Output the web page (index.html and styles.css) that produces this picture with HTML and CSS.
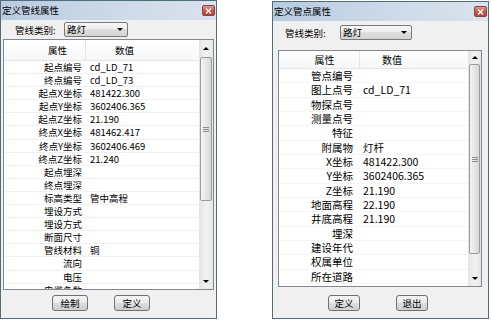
FILE: index.html
```html
<!DOCTYPE html>
<html lang="zh-CN">
<head>
    <meta charset="UTF-8">
    <title>管线属性</title>
    <link rel="stylesheet" href="styles.css">
</head>
<body>
    <!-- 定义管线属性 -->
    <div class="win win-line">
        <div class="title">
            <span>定义管线属性</span>
            <span class="close"><svg width="7" height="6" viewBox="0 0 7 6"><path d="M1 0.5L6 5.5M6 0.5L1 5.5" stroke="#fff" stroke-width="1.4"/></svg></span>
        </div>
        <div class="kind">
            <span class="kind-label">管线类别:</span>
            <span class="combo">路灯<i class="down"></i></span>
        </div>
        <div class="list">
            <div class="table">
                <div class="head">
                    <span class="h1">属性</span>
                    <span class="h2">数值</span>
                </div>
                <div class="row"><span class="k">起点编号</span><span class="v">cd_LD_71</span></div>
                <div class="row"><span class="k">终点编号</span><span class="v">cd_LD_73</span></div>
                <div class="row"><span class="k">起点X坐标</span><span class="v">481422.300</span></div>
                <div class="row"><span class="k">起点Y坐标</span><span class="v">3602406.365</span></div>
                <div class="row"><span class="k">起点Z坐标</span><span class="v">21.190</span></div>
                <div class="row"><span class="k">终点X坐标</span><span class="v">481462.417</span></div>
                <div class="row"><span class="k">终点Y坐标</span><span class="v">3602406.469</span></div>
                <div class="row"><span class="k">终点Z坐标</span><span class="v">21.240</span></div>
                <div class="row"><span class="k">起点埋深</span><span class="v"></span></div>
                <div class="row"><span class="k">终点埋深</span><span class="v"></span></div>
                <div class="row"><span class="k">标高类型</span><span class="v">管中高程</span></div>
                <div class="row"><span class="k">埋设方式</span><span class="v"></span></div>
                <div class="row"><span class="k">埋设方式</span><span class="v"></span></div>
                <div class="row"><span class="k">断面尺寸</span><span class="v"></span></div>
                <div class="row"><span class="k">管线材料</span><span class="v">铜</span></div>
                <div class="row"><span class="k">流向</span><span class="v"></span></div>
                <div class="row"><span class="k">电压</span><span class="v"></span></div>
                <div class="row"><span class="k">电缆条数</span><span class="v"></span></div>
            </div>
            <div class="scroll">
                <div class="arrow"><i class="up"></i></div>
                <div class="track"><div class="thumb"><i class="grip"></i></div></div>
                <div class="arrow arrow-b"><i class="down"></i></div>
            </div>
        </div>
        <div class="btns">
            <span class="btn">绘制</span>
            <span class="btn">定义</span>
        </div>
    </div>

    <!-- 定义管点属性 -->
    <div class="win win-point">
        <div class="title">
            <span>定义管点属性</span>
            <span class="close"><svg width="7" height="6" viewBox="0 0 7 6"><path d="M1 0.5L6 5.5M6 0.5L1 5.5" stroke="#fff" stroke-width="1.4"/></svg></span>
        </div>
        <div class="kind">
            <span class="kind-label">管线类别:</span>
            <span class="combo">路灯<i class="down"></i></span>
        </div>
        <div class="list">
            <div class="table">
                <div class="head">
                    <span class="h1">属性</span>
                    <span class="h2">数值</span>
                </div>
                <div class="row"><span class="k">管点编号</span><span class="v"></span></div>
                <div class="row"><span class="k">图上点号</span><span class="v">cd_LD_71</span></div>
                <div class="row"><span class="k">物探点号</span><span class="v"></span></div>
                <div class="row"><span class="k">测量点号</span><span class="v"></span></div>
                <div class="row"><span class="k">特征</span><span class="v"></span></div>
                <div class="row"><span class="k">附属物</span><span class="v">灯杆</span></div>
                <div class="row"><span class="k">X坐标</span><span class="v">481422.300</span></div>
                <div class="row"><span class="k">Y坐标</span><span class="v">3602406.365</span></div>
                <div class="row"><span class="k">Z坐标</span><span class="v">21.190</span></div>
                <div class="row"><span class="k">地面高程</span><span class="v">22.190</span></div>
                <div class="row"><span class="k">井底高程</span><span class="v">21.190</span></div>
                <div class="row"><span class="k">埋深</span><span class="v"></span></div>
                <div class="row"><span class="k">建设年代</span><span class="v"></span></div>
                <div class="row"><span class="k">权属单位</span><span class="v"></span></div>
                <div class="row"><span class="k">所在道路</span><span class="v"></span></div>
            </div>
            <div class="scroll">
                <div class="arrow"><i class="up"></i></div>
                <div class="track"><div class="thumb"><i class="grip"></i></div></div>
                <div class="arrow arrow-b"><i class="down"></i></div>
            </div>
        </div>
        <div class="btns">
            <span class="btn">定义</span>
            <span class="btn">退出</span>
        </div>
    </div>
</body>
</html>
```

FILE: styles.css
```css
*{
    margin: 0;
    padding: 0;
    box-sizing: border-box;
}
body{
    display: flex;
    align-items: flex-start;
    background-color: #fff;
    font-family: "Noto Sans CJK SC", sans-serif;
    font-size: 9.5px;
    color: #000;
}
.win{
    display: flex;
    flex-direction: column;
    width: 217px;
    border: 1px solid #4f6d7c;
    background-color: #f0f0f0;
}
.win-line{
    height: 319px;
}
.win-point{
    height: 318px;
    margin: 1px 0 0 55px;
}
/* 标题栏 */
.title{
    display: flex;
    align-items: center;
    justify-content: space-between;
    height: 19px;
    padding: 0 1px 0 1px;
    background: linear-gradient(to right, #b9cbe0, #cfdbe9 60%, #d9e2ed);
    line-height: 19px;
}
.close{
    display: flex;
    align-items: center;
    justify-content: center;
    width: 13px;
    height: 11px;
    border: 1px solid #8e3f38;
    border-radius: 2px;
    background: linear-gradient(#e09a90, #c8564b 50%, #b8443a);
}
/* 类别 */
.kind{
    display: flex;
    align-items: center;
    height: 15px;
    margin-top: 2px;
    padding-left: 14px;
}
.win-point .kind{
    margin-top: 4px;
    padding-left: 12px;
}
.kind-label{
    width: 49px;
}
.win-point .kind-label{
    width: 55px;
}
.combo{
    position: relative;
    width: 64px;
    height: 15px;
    padding-left: 2px;
    border: 1px solid #7a7a7a;
    border-radius: 2px;
    background: linear-gradient(#f7f7f7, #ececec 50%, #dedede 50%, #d4d4d4);
    line-height: 13px;
}
.win-point .combo{
    width: 72px;
}
.combo .down{
    position: absolute;
    right: 4px;
    top: 5px;
}
.down, .up{
    display: block;
    width: 0;
    height: 0;
    border-left: 3px solid transparent;
    border-right: 3px solid transparent;
}
.down{
    border-top: 3px solid #000;
}
.up{
    border-bottom: 3px solid #000;
}
/* 列表 */
.list{
    display: flex;
    height: 251px;
    margin: 2px 2px 0 2px;
    border: 1px solid #828790;
    background-color: #fff;
}
.win-point .list{
    height: 237px;
    margin: 10px 6px 0 5px;
}
.table{
    flex: 1;
    overflow: hidden;
}
.head{
    display: flex;
    height: 21px;
    border-bottom: 1px solid #e3e5e8;
    background: linear-gradient(#fff, #f6f7f9);
    line-height: 20px;
}
.win-point .head{
    height: 18px;
    line-height: 17px;
    font-size: 10px;
}
.h1{
    width: 82px;
    padding-left: 26px;
    border-right: 1px solid #e2e4e8;
    text-align: center;
}
.win-point .h1{
    width: 81px;
    padding-left: 11px;
}
.h2{
    padding-left: 29px;
}
.win-point .h2{
    padding-left: 22px;
}
.row{
    display: flex;
    height: 13.1px;
    border-bottom: 1px solid #f0f0f0;
    line-height: 12px;
    white-space: nowrap;
}
.win-point .row{
    height: 14.33px;
    line-height: 13.5px;
    font-size: 10.5px;
    border-bottom-color: #f5f5f5;
}
.k{
    width: 82px;
    padding-right: 4px;
    text-align: right;
}
.win-point .k{
    width: 81px;
    padding-right: 7px;
}
.v{
    padding-left: 4px;
}
.win-point .v{
    padding-left: 3px;
}
/* 滚动条 */
.scroll{
    display: flex;
    flex-direction: column;
    width: 14px;
    background: linear-gradient(to right, #e4e4e4, #f1f1f1 50%, #e6e6e6);
}
.win-point .scroll{
    width: 13px;
}
.arrow{
    display: flex;
    align-items: center;
    justify-content: center;
    height: 17px;
}
.arrow-b{
    height: 16px;
}
.win-point .arrow{
    height: 13px;
}
.win-point .arrow-b{
    height: 15px;
}
.track{
    flex: 1;
}
.thumb{
    display: flex;
    align-items: center;
    justify-content: center;
    height: 144px;
    margin: 0 1px;
    border: 1px solid #9b9b9b;
    border-radius: 2px;
    background: linear-gradient(to right, #f5f5f5, #e6e6e6 50%, #d8d8d8);
}
.win-point .thumb{
    height: 190px;
}
.grip{
    display: block;
    width: 6px;
    height: 5px;
    border-top: 1px solid #8a8a8a;
    border-bottom: 1px solid #8a8a8a;
    background: linear-gradient(transparent 1px, #8a8a8a 1px, #8a8a8a 2px, transparent 2px);
}
/* 按钮 */
.btns{
    display: flex;
    gap: 26px;
    margin-top: 5px;
    padding-left: 51px;
}
.win-point .btns{
    gap: 36px;
    margin-top: 8px;
    padding-left: 55px;
}
.btn{
    width: 36px;
    height: 16px;
    border: 1px solid #707070;
    border-radius: 3px;
    background: linear-gradient(#f3f3f3, #ebebeb 50%, #dddddd 50%, #cfcfcf);
    text-align: center;
    line-height: 14px;
}
.win-point .btn{
    width: 32px;
}
```
